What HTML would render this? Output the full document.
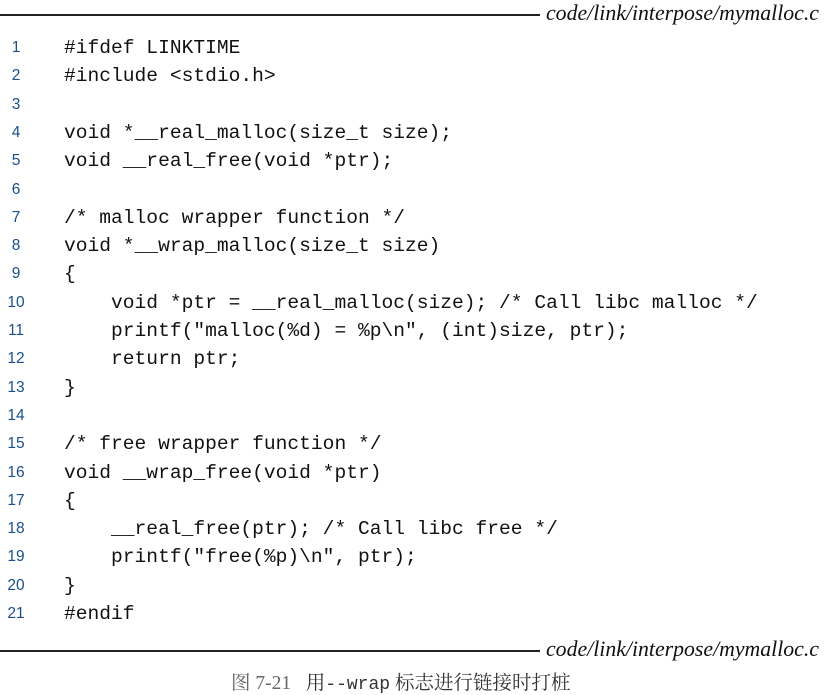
<!DOCTYPE html>
<html><head><meta charset="utf-8"><style>
body{margin:0;width:837px;height:694px;background:#fff;position:relative;overflow:hidden;font-family:"Liberation Mono",monospace;}
.rule{position:absolute;left:0;height:2px;background:#222;}
.lab{position:absolute;font-family:"Liberation Serif",serif;font-style:italic;font-size:21.8px;color:#111;white-space:nowrap;}
.ln{position:absolute;left:0;width:32px;text-align:center;font-family:"Liberation Sans",sans-serif;font-size:15.5px;color:#1a4f8a;}
.c{position:absolute;left:64px;font-size:19.6px;color:#111;white-space:pre;}
.cap{position:absolute;top:667px;left:231px;font-family:"Liberation Serif","Noto Serif CJK SC",serif;font-size:19.5px;color:#333;white-space:pre;}
</style></head><body>
<div class="rule" style="top:14px;width:540px"></div>
<div class="lab" style="top:1px;left:546px">code/link/interpose/mymalloc.c</div>
<div class="rule" style="top:650px;width:540px"></div>
<div class="lab" style="top:637px;left:546px">code/link/interpose/mymalloc.c</div>
<div id="code"></div>
<div class="cap"><span style="color:#666">图 7-21</span>   用<span style="font-family:'Liberation Mono',monospace;font-size:18px">--wrap</span> 标志进行链接时打桩</div>
<script>
var L=["#ifdef LINKTIME","#include <stdio.h>","","void *__real_malloc(size_t size);","void __real_free(void *ptr);","","/* malloc wrapper function */","void *__wrap_malloc(size_t size)","{","    void *ptr = __real_malloc(size); /* Call libc malloc */","    printf(\"malloc(%d) = %p\\n\", (int)size, ptr);","    return ptr;","}","","/* free wrapper function */","void __wrap_free(void *ptr)","{","    __real_free(ptr); /* Call libc free */","    printf(\"free(%p)\\n\", ptr);","}","#endif"];
var h="";for(var i=0;i<L.length;i++){var y=37+i*28.3;h+='<div class="ln" style="top:'+(y+2)+'px">'+(i+1)+'</div><div class="c" style="top:'+y+'px"></div>';}
document.getElementById("code").innerHTML=h;
var cs=document.querySelectorAll(".c");for(var i=0;i<cs.length;i++)cs[i].textContent=L[i];
</script>
</body></html>
